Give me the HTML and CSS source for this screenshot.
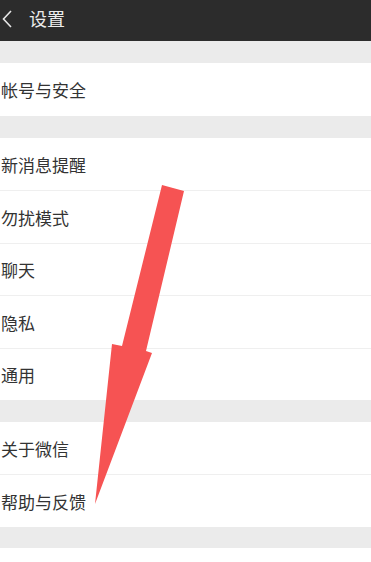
FILE: index.html
```html
<!DOCTYPE html>
<html lang="zh-CN">
<head>
    <meta charset="UTF-8">
    <meta name="viewport" content="width=device-width, initial-scale=1.0">
    <title>设置</title>
    <link rel="stylesheet" href="styles.css">
</head>
<body>
    <div class="top-bar">
        <svg class="back" width="12" height="18" viewBox="0 0 12 18">
            <polyline points="10,1 2.5,9 10,17" fill="none" stroke="#e6e6e6" stroke-width="1.6"/>
        </svg>
        <span class="title">设置</span>
    </div>

    <div class="group first">
        <div class="row">帐号与安全</div>
    </div>

    <div class="group">
        <div class="row">新消息提醒</div>
        <div class="row">勿扰模式</div>
        <div class="row">聊天</div>
        <div class="row">隐私</div>
        <div class="row">通用</div>
    </div>

    <div class="group tight">
        <div class="row">关于微信</div>
        <div class="row">帮助与反馈</div>
    </div>

    <div class="group tight">
        <div class="row">插件</div>
    </div>

    <!-- red annotation arrow drawn over the list -->
    <svg class="arrow" width="371" height="562" viewBox="0 0 371 562">
        <polygon points="162,185 184,191 146,351 152,353 95,504 112,344 122,346" fill="#f65353"/>
    </svg>
</body>
</html>
```

FILE: styles.css
```css
body {
    margin: 0;
    width: 371px;
    height: 562px;
    overflow: hidden;
    background-color: #ebebeb;
    font-family: "Noto Sans CJK SC", "Noto Sans", sans-serif;
    position: relative;
}
.top-bar {
    height: 41px;
    background-color: #2c2c2c;
    display: flex;
    align-items: center;
    padding-left: 1px;
}
.back {
    margin-right: 16px;
    margin-top: -4px;
}
.title {
    color: #ececec;
    font-size: 18px;
    margin-top: -6px;
}
.group {
    background-color: #fff;
    margin-top: 22px;
}
.group.tight {
    margin-top: 21.5px;
}
.row {
    height: 52.5px;
    box-sizing: border-box;
    display: flex;
    align-items: center;
    padding-left: 1px;
    padding-top: 1px;
    font-size: 17px;
    color: #333;
    position: relative;
}
.row + .row {
    border-top: 1px solid #efefef;
}
.arrow {
    position: absolute;
    left: 0;
    top: 0;
    pointer-events: none;
}
```
